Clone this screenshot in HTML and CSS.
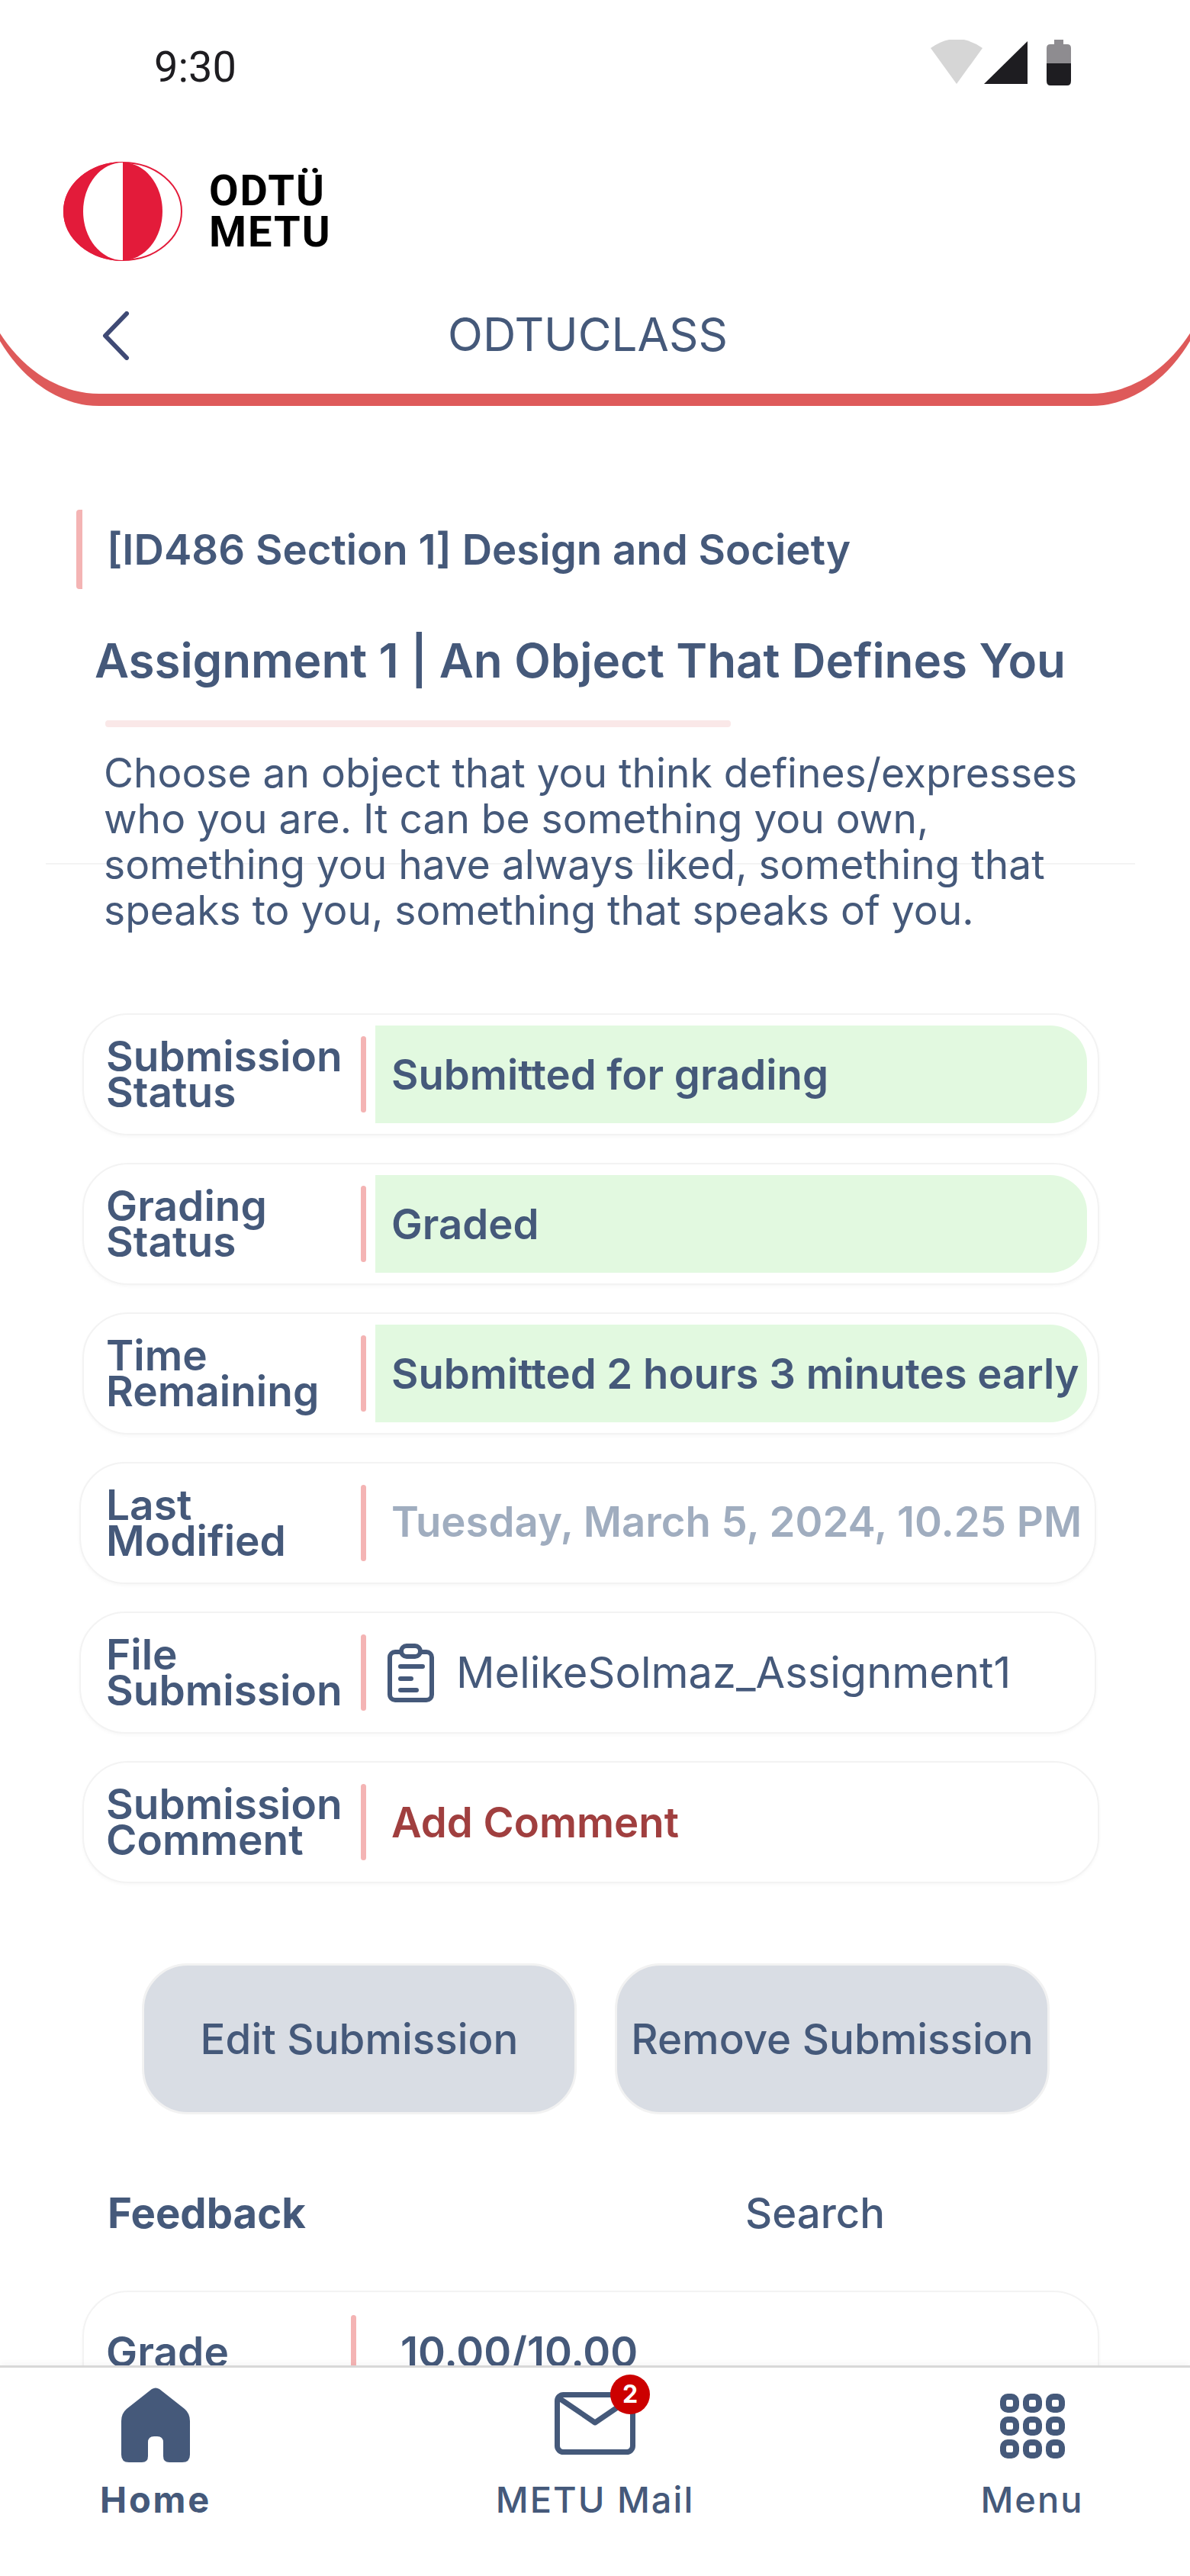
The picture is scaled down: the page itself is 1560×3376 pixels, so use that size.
FILE: index.html
```html
<!DOCTYPE html>
<html lang="en">
<head>
  <meta charset="UTF-8" />
  <title>ODTUCLASS - Assignment</title>
  <link rel="stylesheet" href="styles.css">
</head>
<body>
  <div class="page">
    <header class="top">
      <div class="statusbar">
        <span class="clock">9:30</span>
        <svg class="status-icons" width="184" height="60" viewBox="0 0 184 60">
          <path d="M0 11 Q34 -13 68 11 L34 58 Z" fill="#d6d6d6"/>
          <path d="M127 2 V58 H70 Z" fill="#1e1d21"/>
          <path d="M162 0 H174 V6 H179 Q184 6 184 11 V31 H152 V11 Q152 6 157 6 H162 Z" fill="#8e8c90"/>
          <path d="M152 31 H184 V54 Q184 60 179 60 H157 Q152 60 152 54 Z" fill="#1e1d21"/>
        </svg>
      </div>
      <div class="brand">
        <svg class="brand-mark" width="156" height="130" viewBox="0 0 156 130">
          <ellipse cx="78" cy="65" rx="77" ry="64" fill="none" stroke="#e31b3a" stroke-width="2"/>
          <path d="M78 0 A78 65 0 0 0 78 130 Z" fill="#e31b3a"/>
          <path d="M78 1 A52 64 0 0 0 78 129 Z" fill="#fff"/>
          <path d="M78 1 A52 64 0 0 1 78 129 Z" fill="#e31b3a"/>
        </svg>
        <div class="brand-name">ODTÜ<br>METU</div>
      </div>
      <div class="titlebar">
        <svg class="back" width="40" height="64" viewBox="0 0 40 64">
          <path d="M36 3 L8 32 L36 61" fill="none" stroke="#3f4a75" stroke-width="6" stroke-linecap="round" stroke-linejoin="round"/>
        </svg>
        <h1>ODTUCLASS</h1>
      </div>
    </header>

    <main class="content">
      <div class="course">[ID486 Section 1] Design and Society</div>
      <h2>Assignment 1 | An Object That Defines You</h2>
      <div class="title-rule"></div>
      <div class="desc-wrap">
        <div class="hairline"></div>
        <p class="desc">Choose an object that you think defines/expresses who you are. It can be something you own, something you have always liked, something that speaks to you, something that speaks of you.</p>
      </div>

      <div class="rows">
        <div class="row">
          <div class="label">Submission Status</div>
          <div class="sep"></div>
          <div class="value ok">Submitted for grading</div>
        </div>
        <div class="row">
          <div class="label">Grading<br>Status</div>
          <div class="sep"></div>
          <div class="value ok">Graded</div>
        </div>
        <div class="row">
          <div class="label">Time<br>Remaining</div>
          <div class="sep"></div>
          <div class="value ok">Submitted 2 hours 3 minutes early</div>
        </div>
        <div class="row shift">
          <div class="label">Last<br>Modified</div>
          <div class="sep"></div>
          <div class="value muted">Tuesday, March 5, 2024, 10.25 PM</div>
        </div>
        <div class="row shift">
          <div class="label">File<br>Submission</div>
          <div class="sep"></div>
          <div class="value file">
            <svg width="61" height="77" viewBox="0 0 61 77" fill="none" stroke="#45597a" stroke-width="6" stroke-linecap="round" stroke-linejoin="round">
              <rect x="3" y="11" width="55" height="63" rx="7"/>
              <rect x="18" y="3" width="25" height="14" rx="7" fill="#fff"/>
              <path d="M17 30 H46 M17 46 H31 M17 61 H38"/>
            </svg>
            <span>MelikeSolmaz_Assignment1</span>
          </div>
        </div>
        <div class="row">
          <div class="label">Submission Comment</div>
          <div class="sep"></div>
          <div class="value link">Add Comment</div>
        </div>
      </div>

      <div class="actions">
        <button>Edit Submission</button>
        <button>Remove Submission</button>
      </div>

      <div class="feedback-head">
        <span class="feedback">Feedback</span>
        <span class="search">Search</span>
      </div>

      <div class="row grade">
        <div class="label">Grade</div>
        <div class="sep"></div>
        <div class="value plain">10.00/10.00</div>
      </div>
    </main>

    <nav class="tabs">
      <div class="tab active">
        <div class="tab-icon">
          <svg width="90" height="98" viewBox="0 0 90 98">
            <path d="M40 2 Q45 -1 50 2 L83 28 Q90 34 90 44 V88 Q90 98 80 98 H63 Q55 98 55 90 V72 Q55 64 47 64 H43 Q35 64 35 72 V90 Q35 98 27 98 H10 Q0 98 0 88 V44 Q0 34 7 28 Z" fill="#45597a"/>
          </svg>
        </div>
        <span>Home</span>
      </div>
      <div class="tab">
        <div class="tab-icon mail">
          <svg width="106" height="82" viewBox="0 0 106 82" fill="none" stroke="#45597a" stroke-width="7" stroke-linejoin="round">
            <rect x="3.500" y="3.500" width="99" height="75" rx="8"/>
            <path d="M6 8 L53 40 L100 8"/>
          </svg>
          <b class="badge">2</b>
        </div>
        <span>METU Mail</span>
      </div>
      <div class="tab">
        <div class="tab-icon grid">
          <svg width="85" height="86" viewBox="0 0 85 86" fill="none" stroke="#45597a" stroke-width="8">
            <rect x="4" y="4" width="17" height="17" rx="6"/><rect x="34" y="4" width="17" height="17" rx="6"/><rect x="64" y="4" width="17" height="17" rx="6"/>
            <rect x="4" y="34" width="17" height="17" rx="6"/><rect x="34" y="34" width="17" height="17" rx="6"/><rect x="64" y="34" width="17" height="17" rx="6"/>
            <rect x="4" y="64" width="17" height="17" rx="6"/><rect x="34" y="64" width="17" height="17" rx="6"/><rect x="64" y="64" width="17" height="17" rx="6"/>
          </svg>
        </div>
        <span>Menu</span>
      </div>
    </nav>
  </div>
</body>
</html>
```

FILE: styles.css
```css
* {
  box-sizing: border-box;
}
body {
  margin: 0;
  background: #fff;
  font-family: Inter, 'Noto Sans', sans-serif;
  color: #45597a;
}
.page {
  width: 1560px;
  height: 3376px;
  display: flex;
  flex-direction: column;
  overflow: hidden;
}

/* header, a bit wider than the screen so the red curve gets cut at the edges */
.top {
  height: 532px;
  flex: none;
  margin: 0 -40px;
  padding: 0 40px;
  background: #fff;
  border-bottom: 16px solid #de5a5a;
  border-radius: 0 0 170px 170px / 0 0 239px 239px;
}
.statusbar {
  height: 160px;
  padding: 52px 156px 0 202px;
  display: flex;
  justify-content: space-between;
  align-items: flex-start;
}
.clock {
  font-family: Roboto, sans-serif;
  font-size: 56px;
  line-height: 72px;
  color: #1e1d21;
}
.brand {
  margin-top: 52px;
  padding-left: 83px;
  display: flex;
  align-items: center;
  gap: 35px;
}
.brand-name {
  font-family: Roboto, sans-serif;
  font-weight: 700;
  font-size: 56px;
  line-height: 54px;
  letter-spacing: 2px;
  color: #000;
}
.titlebar {
  margin-top: 53px;
  height: 90px;
  padding-left: 130px;
  display: flex;
  align-items: center;
}
.titlebar h1 {
  margin: 0 0 4px 417px;
  font-size: 60px;
  font-weight: 400;
}

/* content */
.content {
  flex: 1;
  min-height: 0;
  overflow: hidden;
  padding-top: 136px;
}
.course {
  margin-left: 100px;
  height: 104px;
  padding-left: 32px;
  display: flex;
  align-items: center;
  border-left: 8px solid #f4b4b4;
  border-radius: 4px;
  font-size: 54.6px;
  font-weight: 600;
}
h2 {
  margin: 58px 0 0 124px;
  font-size: 62px;
  line-height: 72px;
  font-weight: 600;
  letter-spacing: -0.1px;
}
.title-rule {
  margin: 42px 0 0 138px;
  width: 820px;
  height: 9px;
  background: #fae8e8;
  border-radius: 4px;
}
.desc-wrap {
  position: relative;
  margin: 30px 0 0 136px;
  width: 1300px;
}
.hairline {
  position: absolute;
  left: -76px;
  top: 148px;
  width: 1428px;
  height: 2px;
  background: #f3f3f3;
}
.desc {
  position: relative;
  margin: 0;
  font-size: 53.3px;
  line-height: 60px;
}

.rows {
  margin-top: 105px;
  display: flex;
  flex-direction: column;
  gap: 36px;
}
.row {
  width: 1333px;
  height: 160px;
  margin-left: 108px;
  padding: 15px 14px 15px 29px;
  display: flex;
  align-items: center;
  background: #fff;
  border: 2px solid #f3f3f3;
  border-radius: 60px;
  box-shadow: 0 2px 4px rgba(0,0,0,0.03);
}
.row.shift {
  margin-left: 104px;
  padding-left: 33px;
}
.label {
  width: 334px;
  flex: none;
  font-size: 55px;
  line-height: 47px;
  font-weight: 600;
}
.sep {
  width: 7px;
  height: 100px;
  flex: none;
  background: #f4b4b4;
  border-radius: 4px;
}
.value {
  flex: 1;
  height: 128px;
  margin-left: 12px;
  padding-left: 21px;
  display: flex;
  align-items: center;
  white-space: nowrap;
  font-size: 54.5px;
  font-weight: 600;
}
.value.ok {
  background: #e2f9e0;
  border-radius: 0 48px 48px 0;
}
.value.muted {
  color: #a0adbf;
  padding-bottom: 4px;
}
.value.link {
  color: #a03f3f;
}
.value.file {
  font-size: 56px;
  font-weight: 400;
  gap: 29px;
  padding-left: 16px;
}
.value.plain {
  padding-left: 46px;
}

.actions {
  margin: 105px 0 0 186px;
  display: flex;
  gap: 50px;
}
button {
  width: 570px;
  height: 198px;
  padding: 0;
  background: #d9dde4;
  border: 3px solid #f2f2f2;
  border-radius: 60px;
  font-family: inherit;
  font-size: 54.7px;
  font-weight: 500;
  color: #45597a;
}

.feedback-head {
  margin-top: 99px;
  height: 60px;
  padding-left: 141px;
  display: flex;
  align-items: center;
  font-size: 54.5px;
}
.feedback {
  width: 836px;
  font-weight: 700;
}
.search {
  font-weight: 500;
}
.row.grade {
  margin-top: 72px;
  align-items: flex-start;
  height: 180px;
}
.row.grade .sep {
  margin-top: 15px;
}
.row.grade .label {
  margin-top: 40px;
  width: 321px;
}
.row.grade .value {
  height: auto;
  padding-top: 40px;
  line-height: 47px;
}

/* bottom nav */
.tabs {
  flex: none;
  height: 276px;
  padding-top: 26px;
  display: grid;
  grid-template-columns: 408px 744px 402px;
  background: #fff;
  border-top: 3px solid #d8d8d8;
  box-shadow: 0 -4px 8px rgba(0,0,0,0.03);
}
.tab {
  display: flex;
  flex-direction: column;
  align-items: center;
  font-size: 47px;
  line-height: 56px;
  font-weight: 500;
  letter-spacing: 2px;
}
.tab-icon {
  height: 119px;
}
.tab-icon svg {
  display: block;
}
.tab-icon.mail {
  position: relative;
  padding-top: 6px;
}
.tab-icon.grid {
  padding-top: 8px;
}
.tab.active span {
  font-weight: 700;
  letter-spacing: 2.8px;
}
.badge {
  position: absolute;
  right: -19px;
  top: -17px;
  width: 52px;
  height: 52px;
  border-radius: 50%;
  background: #cc0000;
  color: #fff;
  font-size: 32px;
  line-height: 52px;
  text-align: center;
  letter-spacing: 0;
}
```
